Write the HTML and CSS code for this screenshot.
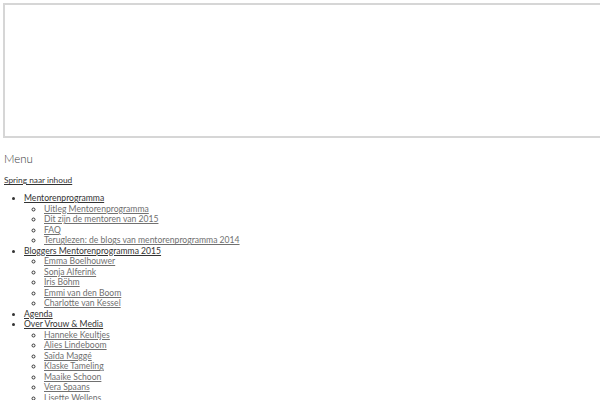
FILE: index.html
```html
<!DOCTYPE html>
<html lang="nl">

<head>
    <meta charset="UTF-8">
    <meta name="viewport" content="width=device-width, initial-scale=1.0">
    <title>Vrouw &amp; Media</title>
    <link rel="stylesheet" href="styles.css">
</head>

<body>
    <div class="frame"></div>
    <div id="page">
        <h3 class="menu-toggle">Menu</h3>
        <a class="skip-link" href="#content">Spring naar inhoud</a>
        <ul class="nav-menu">
            <li><a href="#">Mentorenprogramma</a>
                <ul class="sub-menu">
                    <li><a href="#">Uitleg Mentorenprogramma</a></li>
                    <li><a href="#">Dit zijn de mentoren van 2015</a></li>
                    <li><a href="#">FAQ</a></li>
                    <li><a href="#">Teruglezen: de blogs van mentorenprogramma 2014</a></li>
                </ul>
            </li>
            <li><a href="#">Bloggers Mentorenprogramma 2015</a>
                <ul class="sub-menu">
                    <li><a href="#">Emma Boelhouwer</a></li>
                    <li><a href="#">Sonja Alferink</a></li>
                    <li><a href="#">Iris Böhm</a></li>
                    <li><a href="#">Emmi van den Boom</a></li>
                    <li><a href="#">Charlotte van Kessel</a></li>
                </ul>
            </li>
            <li><a href="#">Agenda</a></li>
            <li><a href="#">Over Vrouw &amp; Media</a>
                <ul class="sub-menu">
                    <li><a href="#">Hanneke Keultjes</a></li>
                    <li><a href="#">Alies Lindeboom</a></li>
                    <li><a href="#">Saïda Maggé</a></li>
                    <li><a href="#">Klaske Tameling</a></li>
                    <li><a href="#">Maaike Schoon</a></li>
                    <li><a href="#">Vera Spaans</a></li>
                    <li><a href="#">Lisette Wellens</a></li>
                </ul>
            </li>
        </ul>
    </div>
</body>

</html>
```

FILE: styles.css
```css
body {
    margin: 0;
    font-family: Lato, 'Open Sans', sans-serif;
    color: #333;
    background-color: #fff;
}

/* embedded frame runs off the right edge in the original */
.frame {
    height: 131px;
    margin: 3px 0 0 3px;
    border: 2px solid #d6d6d6;
    border-right: none;
}

#page {
    padding: 0 4px;
}

.menu-toggle {
    margin: 13px 0 0;
    font-size: 11.5px;
    font-weight: 300;
    line-height: 16px;
    color: #333;
}

.skip-link {
    display: inline-block;
    margin-top: 5px;
    font-size: 8.3px;
    line-height: 11px;
    color: #333;
}

.nav-menu {
    margin: 7px 0 0;
    padding-left: 20px;
    font-size: 8.6px;
    line-height: 10.5px;
}

.nav-menu li {
    padding: 0;
}

.nav-menu a {
    color: #333;
}

.sub-menu {
    margin: 0;
    padding-left: 20px;
    list-style-type: circle;
}

.sub-menu a {
    color: #707070;
}
```
